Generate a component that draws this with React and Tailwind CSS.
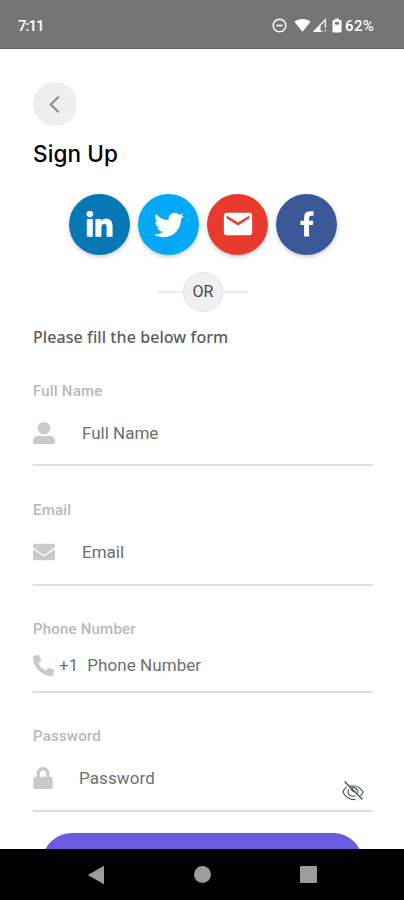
import React from "react";
import { FaLinkedinIn, FaTwitter, FaUserAlt, FaEnvelope, FaPhoneAlt, FaLock } from "react-icons/fa";
import { MdEmail } from "react-icons/md";

function StatusBar() {
  return (
    <header className="flex h-[49px] shrink-0 items-center justify-between border-b border-[#626262] bg-[#757575] pt-[3px] pr-[29px] pl-[18px] text-white">
      <span className="text-[15px] leading-5 font-medium tracking-[-1px]">7:11</span>
      <div className="flex items-center">
        <svg width="15" height="15" viewBox="0 0 15 15" fill="none" stroke="white">
          <circle cx="7.5" cy="7.5" r="6.3" strokeWidth="1.5" />
          <path d="M4.3 7.5h6.4" strokeWidth="1.6" />
        </svg>
        <svg className="ml-[7px]" width="17" height="15" viewBox="0 0 17 15" fill="white">
          <path d="M0.4 3.7C4.8 .2 12.2 .2 16.6 3.7L8.5 13.8z" />
        </svg>
        <svg className="ml-px" width="15" height="15" viewBox="0 0 15 15">
          <path d="M1.8 13.4L13.4 1.8V10M13.4 11.8V13.6M1.8 13.4H10.5" fill="none" stroke="#f2f2f2" strokeWidth="1.4" />
          <path d="M1 14L8.5 6.5V14z" fill="#ffffff" />
        </svg>
        <svg className="ml-[5px]" width="10" height="15" viewBox="0 0 10 15">
          <path d="M3 0.5h4v1.6h1.6q.9 0 .9.9v10.6q0 .9-.9.9H1.4q-.9 0-.9-.9V3q0-.9.9-.9H3z" fill="white" />
          <rect x="3" y="4" width="4" height="2.6" fill="#757575" />
        </svg>
        <span className="ml-[3px] w-[30px] text-[15px] leading-5 font-medium tracking-[0.4px] whitespace-nowrap">62%</span>
      </div>
    </header>
  );
}

function Social({ color, label, children }) {
  return (
    <button aria-label={label} className={`flex size-[61px] items-center justify-center rounded-full text-white shadow-[0_2px_4px_rgba(0,0,0,0.2)] ${color}`}>
      {children}
    </button>
  );
}

function Field({ label, rowClass, icon, children }) {
  return (
    <div className="border-b-2 border-[#dfdfdf]">
      <div className="h-5 text-[15px] leading-5 font-medium tracking-[0.2px] text-[#b8b8b8]">{label}</div>
      <div className={`flex items-center text-[17px] text-[#6d6d6d] ${rowClass}`}>
        <span className="flex w-[22px] shrink-0 text-[#c9c9c9]">{icon}</span>
        {children}
      </div>
    </div>
  );
}

export default function App() {
  return (
    <div className="flex h-[900px] w-[404px] flex-col overflow-hidden bg-white font-['Roboto',sans-serif]">
      <StatusBar />
      <main className="flex h-[800px] shrink-0 flex-col overflow-hidden pr-[31px] pl-[33px]">
        <button aria-label="Back" className="mt-[33px] flex size-[44px] shrink-0 items-center justify-center rounded-full bg-[#eeeeee] pr-[2px]">
          <svg width="11" height="17" viewBox="0 0 11 17" fill="none" stroke="#8a8a8a" strokeWidth="2" strokeLinecap="round" strokeLinejoin="round">
            <path d="M9.2 1.3L1.6 8.5l7.6 7.2" />
          </svg>
        </button>
        <h1 className="mt-[12px] h-[32px] shrink-0 font-['Inter',sans-serif] text-[22.5px] leading-[32px] font-medium tracking-[0.1px] text-black">Sign Up</h1>

        <div className="mt-[23px] flex h-[62px] shrink-0 items-center gap-[8px] pl-[36px]">
          <Social label="LinkedIn" color="bg-[#0877b5]">
            <FaLinkedinIn size={29} className="mt-[2px]" stroke="white" strokeWidth={12} />
          </Social>
          <Social label="Twitter" color="bg-[#03a9f4]"><FaTwitter size={30} className="mt-px" /></Social>
          <Social label="Email" color="bg-[#e93b2d]"><MdEmail size={34} /></Social>
          <Social label="Facebook" color="bg-[#3b5998]">
            <svg width="14" height="26" viewBox="0 0 15 27" fill="white" preserveAspectRatio="none">
              <path d="M14.5.3V5H12Q9.7 5 9.7 7.2V10H14.3L13.8 14.5H9.7V26.5H4.4V14.5H.5V10H4.4V6.7Q4.4.3 10.6.3z" />
            </svg>
          </Social>
        </div>

        <div className="mt-[17px] flex h-[40px] shrink-0 items-center pl-[125px]">
          <div className="h-[2px] w-[25px] bg-[#ebebeb]" />
          <div className="flex size-[40px] items-center justify-center rounded-full border border-[#e5e5e5] bg-[#f0f0f0] text-[16px] text-[#484848]">OR</div>
          <div className="h-[2px] w-[25px] bg-[#ebebeb]" />
        </div>

        <p className="mt-[14px] h-[22px] shrink-0 font-['Noto_Sans',sans-serif] text-[16px] leading-[22px] font-medium tracking-[0.08px] whitespace-nowrap text-[#5c5c5c]">Please fill the below form</p>

        <form className="mt-[33px] flex shrink-0 flex-col">
          <Field label="Full Name" rowClass="h-[63px]" icon={<FaUserAlt size={22} />}>
            <span className="ml-[27px] pt-[2px]">Full Name</span>
          </Field>
          <div className="h-[34px]" />
          <Field label="Email" rowClass="h-[64px]" icon={<FaEnvelope size={22} />}>
            <span className="ml-[27px] pt-[2px]">Email</span>
          </Field>
          <div className="h-[33px]" />
          <Field label="Phone Number" rowClass="h-[52px]" icon={<FaPhoneAlt size={21} />}>
            <span className="ml-[4px] pt-[2px]">+1</span>
            <span className="ml-[9px] pt-[2px] tracking-[0.07px]">Phone Number</span>
          </Field>
          <div className="h-[33px]" />
          <Field label="Password" rowClass="h-[64px]" icon={<FaLock size={22} className="-ml-px" />}>
            <span className="ml-[24px] pt-[2px] tracking-[0.1px]">Password</span>
            <svg className="mt-[26px] mr-[9px] ml-auto" width="22" height="20" viewBox="0 0 22 20" fill="none" stroke="#465055" strokeWidth="1.1" strokeLinecap="round">
              <path d="M3 1l17 17" strokeWidth="1.5" />
              <path d="M4.4 6.2Q1 9 1 11.4Q5 18.7 13 18.6M8 5.3Q15.5 3 21 10.8Q20.5 12.7 18.8 14.5" />
              <path d="M6.8 8.2Q5 11.7 7.7 14.1Q10 16 13 14.8M10 6.4Q15.4 6.4 16 11.7M9.2 8.7l2 2" />
            </svg>
          </Field>
        </form>
        <button aria-label="Sign Up" className="mt-[21px] ml-[9px] h-[60px] w-[321px] shrink-0 rounded-full bg-[#6a5be0]" />
      </main>
      <nav className="flex h-[51px] shrink-0 items-center bg-black pl-[87px]">
        <svg width="18" height="20" viewBox="0 0 18 20" fill="#9c9c9c"><path d="M.8 10L17 .8v18.4z" /></svg>
        <div className="ml-[89px] size-[17px] rounded-full bg-[#9c9c9c]" />
        <div className="ml-[89px] size-[17px] rounded-[1px] bg-[#9c9c9c]" />
      </nav>
    </div>
  );
}
